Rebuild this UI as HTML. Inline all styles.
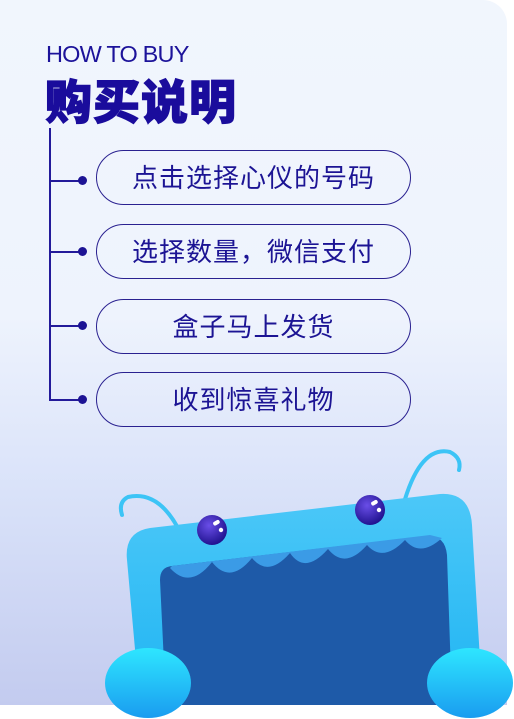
<!DOCTYPE html><html><head><meta charset="utf-8"><style>
body{margin:0;width:514px;height:719px;background:#fff;position:relative;overflow:hidden;font-family:"Liberation Sans","Noto Sans CJK SC",sans-serif}
.card{position:absolute;left:0;top:0;width:507px;height:705px;border-radius:0 24px 0 0;background:linear-gradient(180deg,#f1f6fd 0%,#eef3fd 45%,#d9e2f9 70%,#c3cbef 100%)}
.t1{position:absolute;left:46px;top:41px;font-size:23.5px;color:#1c139a;letter-spacing:-0.8px}
.t2{position:absolute;left:45px;top:71px;font-size:47px;font-weight:900;color:#1a0c9c;font-family:"Noto Sans CJK SC",sans-serif;line-height:56px;-webkit-text-stroke:1.2px #1a0c9c;letter-spacing:1px}
.vl{position:absolute;left:49px;top:128px;width:2px;height:273px;background:#231a9a}
.hl{position:absolute;left:49px;width:34px;height:2px;background:#231a9a}
.dot{position:absolute;left:78px;width:9px;height:9px;border-radius:50%;background:#1c1394}
.pill{position:absolute;left:96px;width:315px;height:55px;border:1.3px solid #2a2190;border-radius:28px;box-sizing:border-box;text-align:center;line-height:52px;font-size:26px;color:#1c1494;font-family:"Noto Sans CJK SC",sans-serif;letter-spacing:1px}
</style></head><body>
<div class="card"></div>
<div class="t1">HOW TO BUY</div>
<div class="t2">购买说明</div>
<div class="vl"></div>
<div class="hl" style="top:180px"></div><div class="dot" style="top:176px"></div>
<div class="hl" style="top:251px"></div><div class="dot" style="top:247px"></div>
<div class="hl" style="top:325px"></div><div class="dot" style="top:321px"></div>
<div class="hl" style="top:399px"></div><div class="dot" style="top:395px"></div>
<div class="pill" style="top:150px">点击选择心仪的号码</div>
<div class="pill" style="top:224px">选择数量，微信支付</div>
<div class="pill" style="top:299px">盒子马上发货</div>
<div class="pill" style="top:372px">收到惊喜礼物</div>
<svg width="514" height="719" style="position:absolute;left:0;top:0">
<defs>
<linearGradient id="fr" x1="0" y1="0" x2="0" y2="1"><stop offset="0" stop-color="#4cc8f8"/><stop offset="1" stop-color="#1fb4f2"/></linearGradient>
<linearGradient id="ft" x1="0" y1="0" x2="0" y2="1"><stop offset="0" stop-color="#2ee6ff"/><stop offset="1" stop-color="#1a9cf0"/></linearGradient>
<radialGradient id="ey" cx="0.4" cy="0.35" r="0.7"><stop offset="0" stop-color="#6a4ee8"/><stop offset="1" stop-color="#1c0f8a"/></radialGradient>
</defs>
<path d="M181 534 Q160 490 128 497 Q118 502 122 515" fill="none" stroke="#3cc4f6" stroke-width="4" stroke-linecap="round"/>
<path d="M403 506 Q420 445 450 452 Q462 458 459 470" fill="none" stroke="#3cc4f6" stroke-width="4" stroke-linecap="round"/>
<path d="M150 528 L440 494 Q470 492 472 525 L480 660 L470 705 L140 705 L127 560 Q124 532 150 528Z" fill="url(#fr)"/>
<path d="M172 566 L425 536 Q445 534 447 555 L452 705 L166 705 L160 580 Q160 567 172 566Z" fill="#1e5aa8"/>
<path d="M170 568 Q190 590 212 562 Q230 585 252 558 Q268 578 290 553 Q305 575 328 549 Q345 570 367 545 Q383 563 405 540 Q420 558 442 538 L430 535 L172 566Z" fill="#3b9be6"/>
<ellipse cx="148" cy="683" rx="43" ry="35" fill="url(#ft)"/>
<ellipse cx="470" cy="683" rx="43" ry="35" fill="url(#ft)"/>
<circle cx="212" cy="530" r="15" fill="url(#ey)"/>
<circle cx="370" cy="510" r="15" fill="url(#ey)"/>
<rect x="213" y="521" width="7" height="4" rx="2" fill="#fff" transform="rotate(-30 216 523)"/>
<circle cx="221" cy="530" r="2.2" fill="#fff"/>
<rect x="371" y="501" width="7" height="4" rx="2" fill="#fff" transform="rotate(-30 374 503)"/>
<circle cx="379" cy="510" r="2.2" fill="#fff"/>
</svg>
</body></html>
